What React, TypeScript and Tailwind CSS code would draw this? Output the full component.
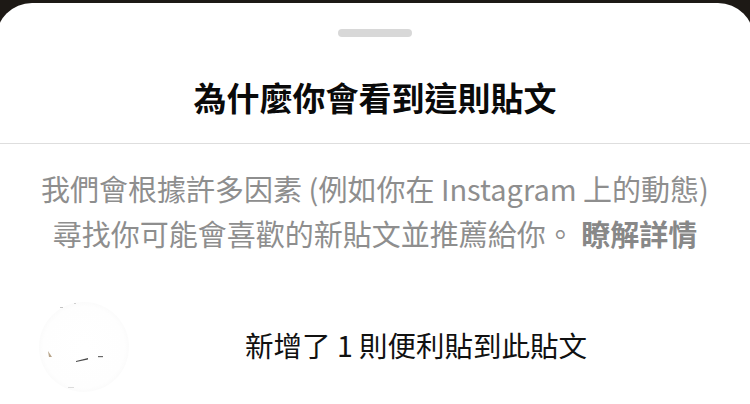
import React from "react";

function BlurredAvatar() {
  return (
    <svg width="92" height="92" viewBox="0 0 92 92" className="shrink-0">
      <defs>
        <radialGradient id="av" cx="50%" cy="50%" r="50%">
          <stop offset="0%" stopColor="#ffffff" />
          <stop offset="90%" stopColor="#fefefe" />
          <stop offset="100%" stopColor="#fbfbfb" />
        </radialGradient>
      </defs>
      <circle cx="46" cy="46" r="45" fill="url(#av)" />
      <path d="M10 50 L14 56 L11 56 Z" fill="#b8a48a" />
      <path d="M38 60 L50 57 L50 58.5 L38 61 Z" fill="#4a4a4a" />
      <rect x="60" y="55" width="5" height="1.2" fill="#6a6a6a" />
      <rect x="22" y="6" width="3" height="1" fill="#c4c4c4" />
      <rect x="36" y="2" width="2" height="1" fill="#d0d0d0" />
      <rect x="30" y="86" width="6" height="1" fill="#dcdcdc" />
    </svg>
  );
}

export default function App() {
  return (
    <div
      className="w-[750px] h-[404px] overflow-hidden bg-[#1d1915] pt-[3px]"
      style={{ fontFamily: '"Noto Sans CJK TC", "Noto Sans", sans-serif' }}
    >
      <div className="-mx-[4px] h-full rounded-t-[36px] bg-white">
        <div className="flex h-[54px] justify-center pt-[26px]">
          <div className="h-[8px] w-[74px] rounded-full bg-[#d8d8d8]" />
        </div>
        <div className="flex h-[87px] items-center justify-center border-b border-[#dedede] pb-[6px]">
          <h1 className="text-[33px] font-bold leading-none text-[#0a0a0a]">為什麼你會看到這則貼文</h1>
        </div>
        <div className="pt-[22px] text-center text-[29px] leading-[45px] text-[#8e8e8e]">
          <p>
            我們會根據許多因素 (例如你在 Instagram 上的動態)
            <br />
            尋找你可能會喜歡的新貼文並推薦給你。 <span className="font-bold text-[#888]">瞭解詳情</span>
          </p>
        </div>
        <div className="mt-[45px] flex items-center pl-[42px]">
          <BlurredAvatar />
          <div className="ml-[115px] pb-[4px] text-[28.5px] leading-none text-[#111]">新增了 1 則便利貼到此貼文</div>
        </div>
      </div>
    </div>
  );
}
